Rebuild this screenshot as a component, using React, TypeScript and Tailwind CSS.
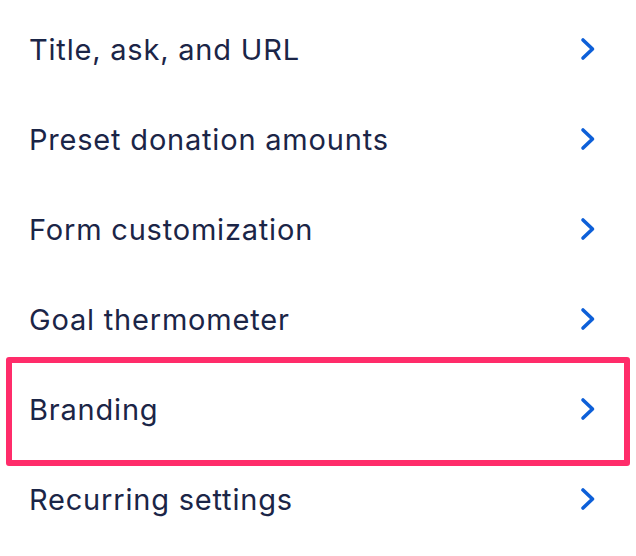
import * as React from "react";

const items = [
  "Title, ask, and URL",
  "Preset donation amounts",
  "Form customization",
  "Goal thermometer",
  "Branding",
  "Recurring settings",
];

function Chevron() {
  return (
    <svg width="16" height="24" viewBox="0 0 16 24" fill="none" aria-hidden="true">
      <path
        d="M3 3L12.5 12L3 21"
        stroke="#0d5fd8"
        strokeWidth="3.6"
        strokeLinecap="round"
        strokeLinejoin="round"
      />
    </svg>
  );
}

export default function App() {
  return (
    <div className="h-[556px] w-[636px] overflow-hidden bg-white pt-[4px] font-['Inter',sans-serif]">
      <ul className="flex flex-col">
        {items.map((label) => (
          <li
            key={label}
            className="relative flex h-[90px] items-center justify-between pl-[29px] pr-[40px]"
          >
            {label === "Branding" ? (
              <span className="pointer-events-none absolute -top-[7px] -bottom-[12px] left-[6px] right-[6px] rounded-[3px] border-[6px] border-[#ff2c6a]" />
            ) : null}
            <span className="translate-y-[1px] text-[29px] tracking-[0.8px] text-[#1b2547]">{label}</span>
            <Chevron />
          </li>
        ))}
      </ul>
    </div>
  );
}
